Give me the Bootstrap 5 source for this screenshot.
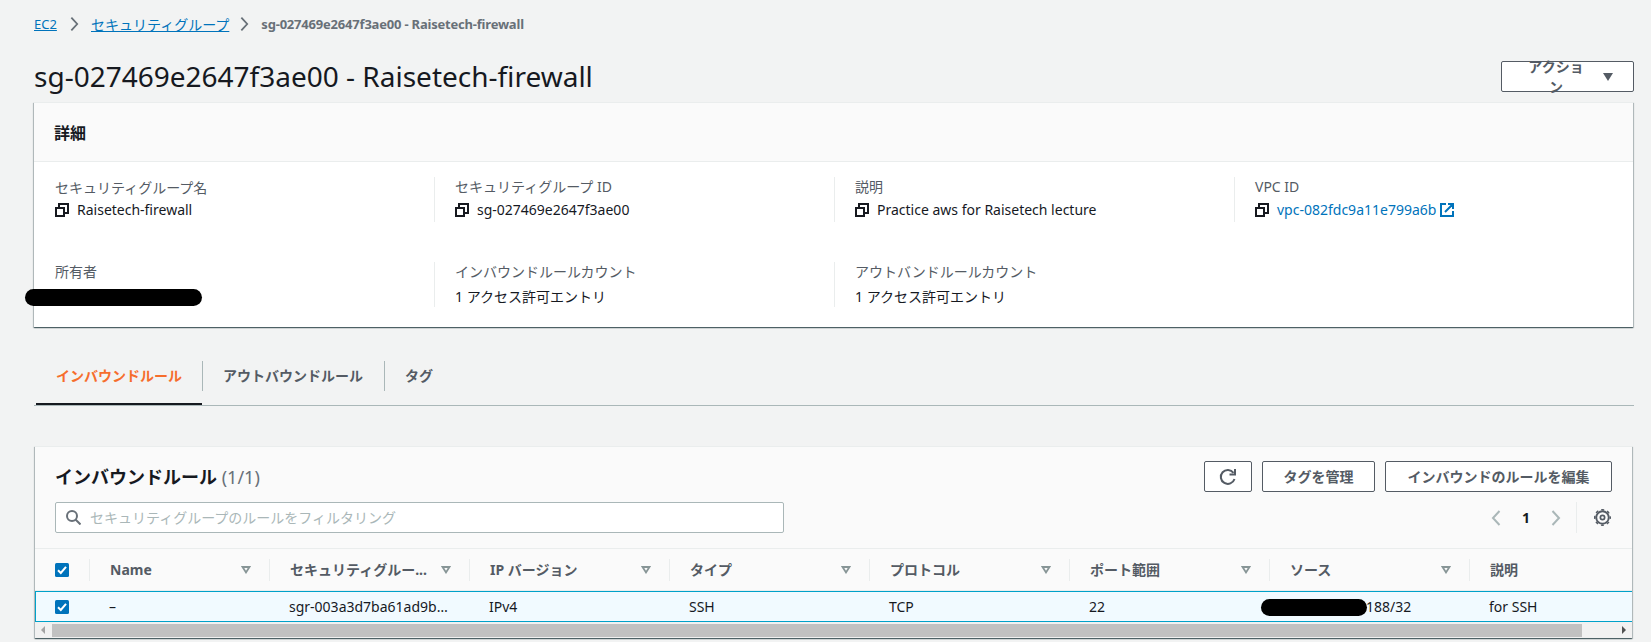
<!DOCTYPE html>
<html lang="ja">
<head>
<meta charset="utf-8">
<title>sg-027469e2647f3ae00 - Raisetech-firewall</title>
<link rel="stylesheet" href="https://cdn.jsdelivr.net/npm/bootstrap@5.3.0/dist/css/bootstrap.min.css">
<style>
body{background:#f2f3f3;color:#16191f;font:14px/22px "Noto Sans","Noto Sans CJK JP",sans-serif;height:642px;overflow:hidden}
main{padding:13px 17px 0 34px}
svg{display:block;flex:none}
a{color:#0073bb}
.crumbs{height:22px;font-size:13px;color:#687078}
.crumbs a{line-height:17px}
.crumbs strong{letter-spacing:-.2px}
.jp{font-family:"Noto Sans CJK JP",sans-serif}
.title-row{height:67px;padding-top:26px}
h1{font-size:28px;line-height:30px;font-weight:400;margin:0;white-space:nowrap}
.btn-aws{height:31px;border:1px solid #545b64;border-radius:2px;background:#fff;color:#545b64;font-weight:700;font-size:14px;line-height:20px;padding:4px 20px;display:flex;align-items:center;justify-content:center}
.panel{background:#fff;border-top:1px solid #eaeded;box-shadow:0 1px 1px 0 rgba(0,28,36,.5),1px 1px 1px 0 rgba(0,28,36,.2),-1px 1px 1px 0 rgba(0,28,36,.2)}
.details{height:225px;margin-right:1px}
.panel-head{height:59px;background:#fafafa;border-bottom:1px solid #eaeded;padding:0 20px}
h2{font-size:16px;font-weight:700;margin:0;line-height:22px}
.kv-grid{display:grid;grid-template-columns:repeat(4,400px);row-gap:40px;padding-top:15px}
.kv{height:45px;padding-left:20px;border-left:1px solid #eaeded}
.kv.first{border-color:transparent}
.kv-label{color:#545b64;height:20px;line-height:20px}
.kv-value{height:25px;line-height:30px;white-space:nowrap}
.redact{display:block;background:#000;border-radius:9px;height:17px;position:relative}
.tab-bar{height:46px;margin-top:33px;border-bottom:1px solid #aab7b8}
.tab-item{height:46px;padding:0 21px;color:#545b64;font-weight:700;line-height:32px;position:relative}
.tab-item+.tab-item::before{content:"";position:absolute;left:0;top:1px;height:30px;border-left:1px solid #aab7b8}
.tab-item.on{color:#ec7211;color:#f66d2c;margin-left:2px;padding:0 20px;border-bottom:2px solid #16191f;height:45px}
.rules{margin:40px 2px 0 1px;height:192px;background:#fafafa}
.rules-top{height:101px;padding:14px 20px 0}
.count{color:#687078;font-weight:400}
.search-box{width:729px;height:31px;border:1px solid #aab7b8;border-radius:2px;background:#fff;color:#aab7b8;padding-left:10px}
.vr-line{width:1px;height:31px;background:#eaeded}
.grid-row{display:grid;grid-template-columns:54px 180px repeat(6,200px) 164px;align-items:center}
.heads{height:43px;border-top:1px solid #eaeded;border-bottom:1px solid #eaeded;color:#545b64;font-weight:700}
.heads>div{height:22px;border-left:1px solid #eaeded;padding:0 18px 0 20px;display:flex;align-items:center;justify-content:space-between;white-space:nowrap}
.heads>div.chk{border:0;padding-left:20px}
.cells{height:31px;border:1px solid #00a1c9;border-right:0;background:#f1faff}
.cells>div{padding-left:19px;white-space:nowrap}
.sbar{height:16px;background:#f1f1f1}
.thumb{width:1530px;height:13px;background:#c1c1c1}
</style>
<script src="https://cdn.jsdelivr.net/npm/bootstrap@5.3.0/dist/js/bootstrap.bundle.min.js"></script>
</head>
<body>
<svg width="0" height="0" class="position-absolute">
<symbol id="copy" viewBox="0 0 14 14"><path d="M1 5h8v8H1zM4 4.500V1h9v9H9.500" fill="none" stroke="#16191f" stroke-width="2"/></symbol>
<symbol id="sort" viewBox="0 0 10 8"><path d="M1.600 1h6.800L5 6.400z" fill="none" stroke="#879596" stroke-width="1.800"/></symbol>
<symbol id="tick" viewBox="0 0 14 14"><rect width="14" height="14" rx="1.500" fill="#0073bb"/><path d="M3 7.300l2.800 2.700L11 3.800" fill="none" stroke="#fff" stroke-width="2"/></symbol>
<symbol id="next" viewBox="0 0 10 16"><path d="M1.500 1l6.500 7-6.500 7" fill="none" stroke="currentColor" stroke-width="2"/></symbol>
</svg>
<main>
<nav class="crumbs d-flex align-items-center">
<a href="#" style="width:24px">EC2</a><svg class="ms-3" style="margin-left:12px!important" width="9" height="16"><use href="#next"/></svg>
<a href="#" class="jp" style="margin-left:12px;font-size:14px">セキュリティグループ</a><svg style="margin-left:11px" width="9" height="16"><use href="#next"/></svg>
<strong style="margin-left:12px" class="text-nowrap">sg-027469e2647f3ae00 - Raisetech-firewall</strong>
</nav>
<div class="title-row d-flex justify-content-between">
<h1>sg-027469e2647f3ae00 - Raisetech-firewall</h1>
<button class="btn-aws" style="width:133px">アクション<svg width="10" height="8" style="margin-left:13px"><path d="M0 0h10L5 8z" fill="#545b64"/></svg></button>
</div>
<section class="panel details">
<div class="panel-head d-flex align-items-center"><h2 class="jp">詳細</h2></div>
<div class="kv-grid">
<div class="kv first"><div class="kv-label jp">セキュリティグループ名</div><div class="kv-value d-flex align-items-center"><svg width="14" height="14" class="me-2"><use href="#copy"/></svg><span class="v1">Raisetech-firewall</span></div></div>
<div class="kv"><div class="kv-label">セキュリティグループ ID</div><div class="kv-value d-flex align-items-center"><svg width="14" height="14" class="me-2"><use href="#copy"/></svg><span class="v2">sg-027469e2647f3ae00</span></div></div>
<div class="kv"><div class="kv-label">説明</div><div class="kv-value d-flex align-items-center"><svg width="14" height="14" class="me-2"><use href="#copy"/></svg><span class="v3">Practice aws for Raisetech lecture</span></div></div>
<div class="kv"><div class="kv-label">VPC ID</div><div class="kv-value d-flex align-items-center"><svg width="14" height="14" class="me-2"><use href="#copy"/></svg><a href="#" class="text-decoration-none v4">vpc-082fdc9a11e799a6b</a><svg width="14" height="14" style="margin-left:4px"><path d="M6 1H1v12h12V8M8 1h5v5M13 1L5 9" fill="none" stroke="#0073bb" stroke-width="2"/></svg></div></div>
<div class="kv first"><div class="kv-label">所有者</div><span class="redact" style="width:177px;left:-30px;top:7px"></span></div>
<div class="kv"><div class="kv-label">インバウンドルールカウント</div><div class="kv-value">1 アクセス許可エントリ</div></div>
<div class="kv"><div class="kv-label">アウトバンドルールカウント</div><div class="kv-value">1 アクセス許可エントリ</div></div>
</div>
</section>
<div class="tab-bar d-flex">
<div class="tab-item on">インバウンドルール</div><div class="tab-item">アウトバウンドルール</div><div class="tab-item">タグ</div>
</div>
<section class="panel rules">
<div class="rules-top">
<div class="d-flex align-items-center"><h2 class="me-auto" style="font-size:18px">インバウンドルール <span class="count">(1/1)</span></h2>
<button class="btn-aws p-0" style="width:48px"><svg width="18" height="18" viewBox="0 0 18 18"><path d="M15.500 11A7 7 0 1 1 14.500 4.800" fill="none" stroke="#545b64" stroke-width="2"/><path d="M16 1v5.500h-5.500" fill="none" stroke="#545b64" stroke-width="2"/></svg></button>
<button class="btn-aws p-0" style="width:113px;margin-left:10px">タグを管理</button>
<button class="btn-aws p-0" style="width:227px;margin-left:10px">インバウンドのルールを編集</button></div>
<div class="d-flex align-items-center" style="margin-top:10px">
<div class="search-box d-flex align-items-center me-auto"><svg width="15" height="15"><circle cx="6" cy="6" r="5" fill="none" stroke="#687078" stroke-width="2"/><path d="M9.500 9.500l5 5" stroke="#687078" stroke-width="2"/></svg><span style="margin-left:9px">セキュリティグループのルールをフィルタリング</span></div>
<svg width="10" height="16" style="color:#aab7b8;transform:scaleX(-1)"><use href="#next"/></svg><b style="width:8px;margin:0 21px;">1</b><svg width="10" height="16" style="color:#aab7b8"><use href="#next"/></svg>
<span class="vr-line" style="margin:0 17px 0 15px"></span>
<svg width="17" height="17" viewBox="0 0 16 16" style="margin-right:1px"><circle cx="8" cy="8" r="5.900" fill="none" stroke="#545b64" stroke-width="1.800"/><circle cx="8" cy="8" r="7.300" fill="none" stroke="#545b64" stroke-width="1.400" stroke-dasharray="2.800 2.930" stroke-dashoffset="1.400"/><circle cx="8" cy="8" r="2" fill="none" stroke="#545b64" stroke-width="1.600"/></svg>
</div>
</div>
<div class="grid-row heads">
<div class="chk"><svg width="14" height="14"><use href="#tick"/></svg></div>
<div>Name<svg width="10" height="8"><use href="#sort"/></svg></div>
<div>セキュリティグルー...<svg width="10" height="8"><use href="#sort"/></svg></div>
<div>IP バージョン<svg width="10" height="8"><use href="#sort"/></svg></div>
<div>タイプ<svg width="10" height="8"><use href="#sort"/></svg></div>
<div>プロトコル<svg width="10" height="8"><use href="#sort"/></svg></div>
<div>ポート範囲<svg width="10" height="8"><use href="#sort"/></svg></div>
<div>ソース<svg width="10" height="8"><use href="#sort"/></svg></div>
<div>説明</div>
</div>
<div class="grid-row cells">
<div><svg width="14" height="14"><use href="#tick"/></svg></div><div>–</div><div>sgr-003a3d7ba61ad9b…</div><div>IPv4</div><div>SSH</div><div>TCP</div><div>22</div>
<div class="d-flex align-items-center p-0"><span class="redact" style="width:106px;left:-9px;top:1px"></span><span style="margin-left:-10px">188/32</span></div><div>for SSH</div>
</div>
<div class="sbar d-flex align-items-center"><svg width="17" height="14"><path d="M10 3v8L6 7z" fill="#a3a3a3"/></svg><div class="thumb"></div><svg width="17" height="14" class="ms-auto"><path d="M7 3v8l4-4z" fill="#505050"/></svg></div>
</section>
</main>
</body>
</html>
